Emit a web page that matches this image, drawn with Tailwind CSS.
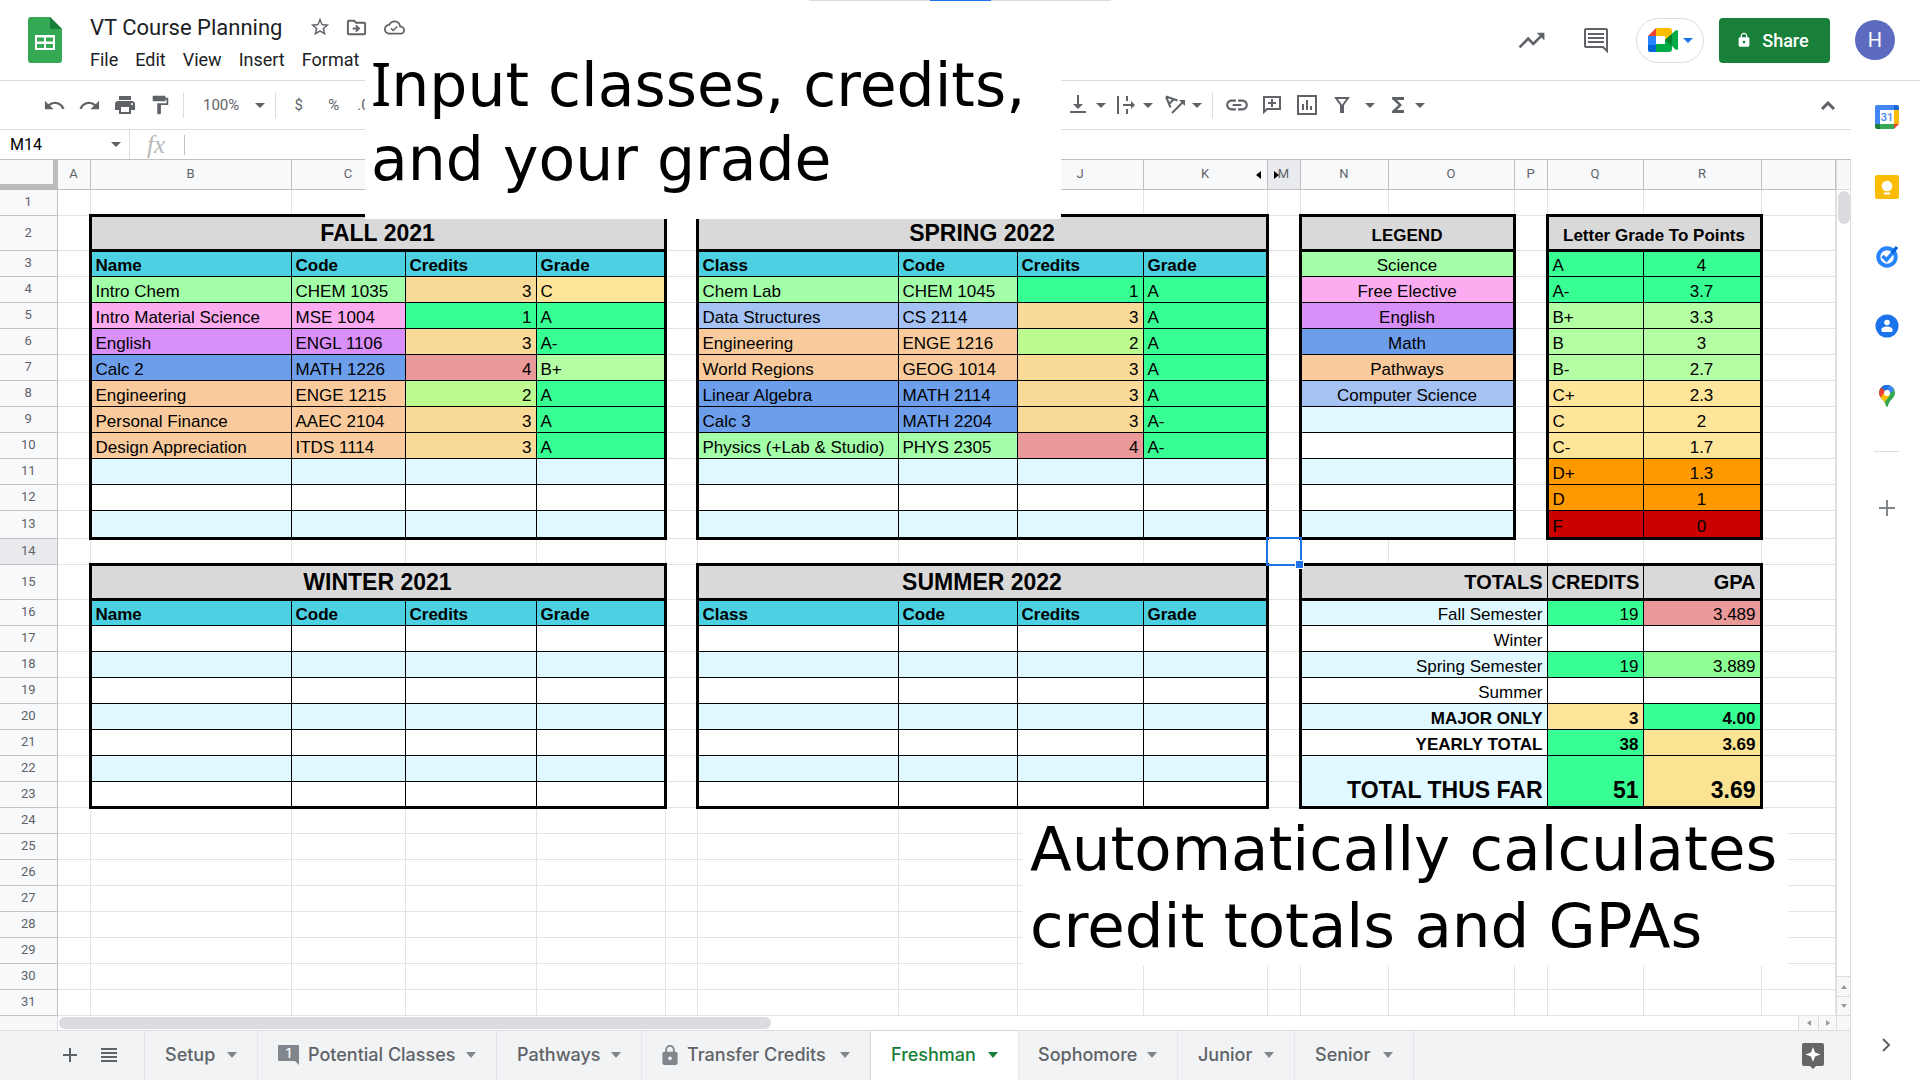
<!DOCTYPE html>
<html lang="en">
<head>
<meta charset="utf-8">
<meta name="viewport" content="width=device-width, initial-scale=1">
<title>VT Course Planning</title>
<script src="https://cdn.jsdelivr.net/npm/@tailwindcss/browser@4"></script>
</head>
<body class="relative flex h-screen flex-col overflow-hidden bg-white font-[Roboto,sans-serif] text-[#5f6368]">

<header class="flex h-[81px] shrink-0 border-b border-[#dadce0]">
  <a href="#" aria-label="Sheets home" class="mt-[17px] ml-7 block h-[46px] w-[34px] shrink-0">
    <svg viewBox="0 0 34 46" class="h-[46px] w-[34px]"><path fill="#34a853" d="M3 0h19l12 12v31a3 3 0 0 1-3 3H3a3 3 0 0 1-3-3V3a3 3 0 0 1 3-3z"/><path fill="#188038" d="M22 0l12 12H22z"/><path fill="#fff" d="M7 18h20v15H7z"/><path fill="#34a853" d="M9 20.500h7v4H9zm9 0h7v4h-7zM9 27h7v4H9zm9 0h7v4h-7z"/></svg>
  </a>
  <div class="ml-[26px] flex-1">
    <div class="mt-2 flex h-[38px] items-center">
      <input aria-label="Document name" value="VT Course Planning" class="w-[213px] bg-transparent pl-[2px] text-[22px] text-[#202124] outline-none">
      <button aria-label="Star" class="ml-2"><svg viewBox="0 0 24 24" class="size-[22px] fill-[#5f6368]"><path d="M22 9.240l-7.190-.620L12 2 9.190 8.630 2 9.240l5.460 4.730L5.820 21 12 17.270 18.180 21l-1.630-7.030L22 9.240zM12 15.400l-3.760 2.270 1-4.280-3.320-2.880 4.380-.380L12 6.100l1.710 4.040 4.380.380-3.320 2.880 1 4.280L12 15.400z"/></svg></button>
      <button aria-label="Move" class="ml-[14px]"><svg viewBox="0 0 24 24" class="size-[23px] fill-[#5f6368]"><path d="M20 6h-8l-2-2H4c-1.100 0-2 .9-2 2v12c0 1.100.9 2 2 2h16c1.100 0 2-.9 2-2V8c0-1.100-.9-2-2-2zm0 12H4V6h5.170l2 2H20v10z"/><path d="M12 17l4-4-4-4-1.400 1.400L12.200 12H8v2h4.200l-1.600 1.600z"/></svg></button>
      <button aria-label="Saved to Drive" class="ml-4"><svg viewBox="0 0 24 24" class="size-[21px] fill-[#5f6368]"><path d="M19.350 10.040C18.670 6.590 15.640 4 12 4 9.110 4 6.600 5.640 5.350 8.040 2.340 8.360 0 10.910 0 14c0 3.310 2.690 6 6 6h13c2.760 0 5-2.240 5-5 0-2.640-2.050-4.780-4.650-4.960zM19 18H6c-2.210 0-4-1.790-4-4 0-2.050 1.530-3.760 3.560-3.970l1.070-.110.500-.950C8.080 7.140 9.940 6 12 6c2.620 0 4.880 1.860 5.390 4.430l.300 1.500 1.530.110c1.560.100 2.780 1.410 2.780 2.960 0 1.650-1.350 3-3 3z"/><path d="M10.500 14.200l-1.800-1.800-1.200 1.200 3 3 5.200-5.200-1.200-1.200z"/></svg></button>
    </div>
    <nav class="flex gap-[17px] text-[18px] leading-[28px] text-[#202124]">
      <button class="ml-[2px]">File</button><button>Edit</button><button>View</button><button>Insert</button><button>Format</button>
    </nav>
  </div>
  <div class="flex items-center pr-[25px]">
    <button aria-label="Activity"><svg viewBox="0 0 24 24" class="size-[31px] fill-[#5f6368]"><path d="M16 6l2.290 2.290-4.880 4.880-4-4L2 16.590 3.410 18l6-6 4 4 6.300-6.290L22 12V6z"/></svg></button>
    <button aria-label="Comments" class="ml-9"><svg viewBox="0 0 26 26" class="size-[26px]"><path fill="none" stroke="#5f6368" stroke-width="2" d="M3 2h20a1 1 0 0 1 1 1v21l-4-4H3a1 1 0 0 1-1-1V3a1 1 0 0 1 1-1z"/><path fill="#5f6368" d="M5 6h16v2H5zm0 4h16v2H5zm0 4h16v2H5z"/></svg></button>
    <button aria-label="Join a call" class="ml-[27px] flex h-[45px] w-[68px] items-center justify-center gap-[5px] rounded-full border border-[#dadce0]">
      <svg viewBox="0 0 30 24" class="h-6 w-[30px]"><path fill="#ea4335" d="M0 8l8-8v8z"/><path fill="#fbbc04" d="M8 0h13a3 3 0 0 1 3 3v5l-7 5V8H8z"/><path fill="#2684fc" d="M0 8h8v9H0z"/><path fill="#0066da" d="M0 17h8v7H2a2 2 0 0 1-2-2z"/><path fill="#00ac47" d="M8 16h9v-4l10-9q3-2 3 0v18q0 2-3 0l-3-3v3a3 3 0 0 1-3 3H8z"/><path fill="#00832d" d="M17 12l7-6v12z"/></svg>
      <svg viewBox="0 0 10 5" class="h-[5px] w-[10px]"><path fill="#1a73e8" d="M0 0h10L5 5z"/></svg>
    </button>
    <button class="ml-[15px] flex h-[45px] w-[111px] items-center justify-center gap-[10px] rounded-[4px] bg-[#188038] pr-1 text-[18px] font-medium text-white"><svg viewBox="0 0 24 24" class="size-4 fill-white"><path d="M18 8h-1V6c0-2.760-2.240-5-5-5S7 3.240 7 6v2H6c-1.100 0-2 .9-2 2v10c0 1.100.9 2 2 2h12c1.100 0 2-.9 2-2V10c0-1.100-.9-2-2-2zm-6 9c-1.100 0-2-.9-2-2s.9-2 2-2 2 .9 2 2-.9 2-2 2zm3.100-9H8.900V6c0-1.710 1.390-3.100 3.100-3.100 1.710 0 3.100 1.390 3.100 3.100v2z"/></svg>Share</button>
    <button aria-label="Account" class="ml-[25px] size-10 rounded-full bg-[#5c6bc0] text-[20px] text-white">H</button>
  </div>
</header>

<div class="flex min-h-0 flex-1">
  <main class="flex min-w-0 flex-1 flex-col">
    <div class="flex h-[49px] shrink-0 items-center border-b border-[#dadce0] text-[15px]">
      <div class="flex w-[1061px] shrink-0 items-center pl-[37px]">
        <button aria-label="Undo" class="flex w-[35px] justify-center"><svg viewBox="0 0 24 24" class="size-[23px] fill-[#5f6368]"><path d="M12.500 8c-2.650 0-5.050.990-6.900 2.600L2 7v9h9l-3.620-3.620c1.390-1.160 3.160-1.880 5.120-1.880 3.540 0 6.550 2.310 7.600 5.500l2.370-.780C21.080 11.030 17.150 8 12.500 8z"/></svg></button>
        <button aria-label="Redo" class="flex w-[35px] justify-center"><svg viewBox="0 0 24 24" class="size-[23px] fill-[#5f6368]"><path d="M18.400 10.600C16.550 8.990 14.150 8 11.500 8c-4.650 0-8.580 3.030-9.960 7.220L3.900 16c1.050-3.190 4.050-5.500 7.600-5.500 1.950 0 3.730.720 5.120 1.880L13 16h9V7l-3.600 3.600z"/></svg></button>
        <button aria-label="Print" class="flex w-[35px] justify-center"><svg viewBox="0 0 24 24" class="size-[24px] fill-[#5f6368]"><path d="M19 8H5c-1.660 0-3 1.340-3 3v6h4v4h12v-4h4v-6c0-1.660-1.340-3-3-3zm-3 11H8v-5h8v5zm3-7c-.550 0-1-.450-1-1s.450-1 1-1 1 .450 1 1-.450 1-1 1zm-1-9H6v4h12V3z"/></svg></button>
        <button aria-label="Paint format" class="flex w-[35px] justify-center"><svg viewBox="0 0 24 24" class="size-[22px] fill-[#5f6368]"><path d="M18 4V3c0-.550-.450-1-1-1H5c-.550 0-1 .450-1 1v4c0 .550.450 1 1 1h12c.550 0 1-.450 1-1V6h1v4H9v11c0 .550.450 1 1 1h2c.550 0 1-.450 1-1v-9h8V4h-3z"/></svg></button>
        <span class="ml-[6px] h-[25px] w-px bg-[#dadce0]"></span>
        <button class="ml-[19px] flex items-center gap-[16px]">100%<svg viewBox="0 0 10 5" class="h-[5px] w-[10px]"><path fill="#5f6368" d="M0 0h10L5 5z"/></svg></button>
        <span class="ml-[10px] h-[25px] w-px bg-[#dadce0]"></span>
        <button class="ml-[5px] w-[35px] text-center">$</button>
        <button class="w-[35px] text-center">%</button>
        <button class="ml-[6px]">.0</button>
      </div>
      <div class="flex flex-1 items-center">
        <button aria-label="Vertical align" class="flex w-[50px] items-center gap-[10px] pl-[9px]"><svg viewBox="0 0 16 20" class="h-5 w-4 shrink-0"><path fill="#5f6368" d="M0 16h16v2H0zM7 0h2v9h4l-5 5-5-5h4z"/></svg><svg viewBox="0 0 10 5" class="h-[5px] w-[10px]"><path fill="#5f6368" d="M0 0h10L5 5z"/></svg></button>
        <button aria-label="Text wrapping" class="flex w-[49px] items-center gap-[8px] pl-[6px]"><svg viewBox="0 0 18 20" class="h-5 w-[18px] shrink-0"><path fill="#5f6368" d="M0 1h2v18H0zM9 1h2v5H9zM9 14h2v5H9zM6 9h8V6l4 4-4 4v-3H6z"/></svg><svg viewBox="0 0 10 5" class="h-[5px] w-[10px]"><path fill="#5f6368" d="M0 0h10L5 5z"/></svg></button>
        <button aria-label="Text rotation" class="flex w-[44px] items-center gap-[6px] pl-[5px]"><svg viewBox="0 0 21 20" class="h-5 w-[21px] shrink-0"><path fill="none" stroke="#5f6368" stroke-width="2" d="M1 1.500l11.500 4M1 1.500l4.500 11M4 9l5-5M7 18l11-11"/><path fill="#5f6368" d="M14 5h6v6z"/></svg><svg viewBox="0 0 10 5" class="h-[5px] w-[10px] shrink-0"><path fill="#5f6368" d="M0 0h10L5 5z"/></svg></button>
        <span class="ml-2 h-[25px] w-px bg-[#dadce0]"></span>
        <button aria-label="Insert link" class="ml-[6px] flex w-[35px] justify-center"><svg viewBox="0 0 24 24" class="size-[26px] fill-[#5f6368]"><path d="M3.900 12c0-1.710 1.390-3.100 3.100-3.100h4V7H7c-2.760 0-5 2.240-5 5s2.240 5 5 5h4v-1.900H7c-1.710 0-3.100-1.390-3.100-3.100zM8 13h8v-2H8v2zm9-6h-4v1.900h4c1.710 0 3.100 1.390 3.100 3.100s-1.390 3.100-3.100 3.100h-4V17h4c2.760 0 5-2.240 5-5s-2.240-5-5-5z"/></svg></button>
        <button aria-label="Insert comment" class="flex w-[35px] justify-center"><svg viewBox="0 0 18 18" class="size-[18px]"><path fill="none" stroke="#5f6368" stroke-width="2" d="M1 1h16v12H4l-3 3z"/><path fill="#5f6368" d="M8 3h2v3h3v2h-3v3H8V8H5V6h3z"/></svg></button>
        <button aria-label="Insert chart" class="flex w-[35px] justify-center"><svg viewBox="0 0 20 20" class="size-5"><path fill="none" stroke="#5f6368" stroke-width="2" d="M1 1h18v18H1z"/><path fill="#5f6368" d="M5 9h2v6H5zm4-4h2v10H9zm4 6h2v4h-2z"/></svg></button>
        <button aria-label="Create a filter" class="flex w-[36px] justify-center"><svg viewBox="0 0 16 16" class="size-4"><path fill="none" stroke="#5f6368" stroke-width="2" d="M2 1h12L9 8v7H7V8z"/></svg></button>
        <button aria-label="Filter views" class="flex w-5 justify-center"><svg viewBox="0 0 10 5" class="h-[5px] w-[10px]"><path fill="#5f6368" d="M0 0h10L5 5z"/></svg></button>
        <button aria-label="Functions" class="ml-[6px] flex items-center gap-[5px]"><svg viewBox="0 0 24 24" class="size-6 fill-[#5f6368]"><path d="M18 4H6v2l6.500 6L6 18v2h12v-3h-7l5-5-5-5h7z"/></svg><svg viewBox="0 0 10 5" class="h-[5px] w-[10px]"><path fill="#5f6368" d="M0 0h10L5 5z"/></svg></button>
      </div>
      <button aria-label="Hide the menus" class="mr-4"><svg viewBox="0 0 14 9" class="h-[9px] w-[14px]"><path fill="none" stroke="#5f6368" stroke-width="3" d="M1 8l6-6 6 6"/></svg></button>
    </div>

    <div class="flex h-[30px] shrink-0 items-center border-b border-[#c0c0c0]">
      <input aria-label="Name box" value="M14" class="w-[111px] bg-transparent pl-[10px] text-[16px] text-black outline-none">
      <button aria-label="Name box menu"><svg viewBox="0 0 10 5" class="h-[5px] w-[10px]"><path fill="#5f6368" d="M0 0h10L5 5z"/></svg></button>
      <span class="ml-2 h-full w-px bg-[#dadce0]"></span>
      <label for="formula" class="w-[54px] pl-[17px] font-['Liberation_Serif',serif] text-[25px] leading-[26px] text-[#b8b8b8] italic">fx</label>
      <input id="formula" class="h-5 flex-1 border-l border-[#c0c0c0] bg-transparent pl-2 outline-none">
    </div>

    <div class="flex min-h-0 flex-1">
      <div class="min-w-0 flex-1 overflow-hidden">
        <table id="sheet" class="w-full table-fixed border-collapse font-['Liberation_Sans',Arial,sans-serif] text-[17px] leading-[20px] text-black"></table>
      </div>
      <div class="flex w-[15px] shrink-0 flex-col items-center border-x border-[#dadce0]">
        <div class="h-[30px] w-full border-b border-[#dadce0] bg-[#f8f8f8]"></div>
        <div class="mt-px h-[33px] w-3 rounded-full bg-[#dadce0]"></div>
        <div class="flex-1"></div>
        <button aria-label="Scroll up" class="flex h-5 w-full items-center justify-center border-t border-[#dadce0] bg-[#f8f8f8]"><svg viewBox="0 0 6 4" class="h-1 w-[6px]"><path fill="#999" d="M0 4h6L3 0z"/></svg></button>
        <button aria-label="Scroll down" class="flex h-5 w-full items-center justify-center border-y border-[#dadce0] bg-[#f8f8f8]"><svg viewBox="0 0 6 4" class="h-1 w-[6px]"><path fill="#999" d="M0 0h6L3 4z"/></svg></button>
      </div>
    </div>

    <div class="flex h-[15px] shrink-0 items-center border-r border-b border-[#dadce0]">
      <div class="h-full w-[58px] border-r border-[#dadce0] bg-[#f8f8f8]"></div>
      <div class="ml-px h-3 w-[712px] rounded-full bg-[#dadce0]"></div>
      <div class="flex-1"></div>
      <button aria-label="Scroll left" class="flex h-full w-5 items-center justify-center border-l border-[#dadce0] bg-[#f8f8f8]"><svg viewBox="0 0 4 6" class="h-[6px] w-1"><path fill="#999" d="M4 0v6L0 3z"/></svg></button>
      <button aria-label="Scroll right" class="flex h-full w-[18px] items-center justify-center border-l border-[#dadce0] bg-[#f8f8f8]"><svg viewBox="0 0 4 6" class="h-[6px] w-1"><path fill="#999" d="M0 0v6l4-3z"/></svg></button>
      <div class="h-full w-[14px] border-l border-[#dadce0] bg-[#f8f8f8]"></div>
    </div>

    <footer class="flex h-[49px] shrink-0 items-center border-r border-[#dadce0] bg-[#f1f3f4] font-[Inter,sans-serif] text-[18px] font-medium">
      <div class="flex h-full w-[145px] shrink-0 items-center border-r border-[#e3e5e8] pl-[63px] pb-px">
        <button aria-label="Add sheet"><svg viewBox="0 0 14 14" class="size-[14px]"><path fill="#5f6368" d="M6 0h2v6h6v2H8v6H6V8H0V6h6z"/></svg></button>
        <button aria-label="All sheets" class="ml-6"><svg viewBox="0 0 16 15" class="h-[15px] w-4"><path fill="#5f6368" d="M0 0h16v2H0zm0 4h16v2H0zm0 4h16v2H0zm0 4h16v2H0z"/></svg></button>
      </div>
      <div id="tabs" class="flex h-full flex-1"></div>
      <button aria-label="Explore" class="mr-[25px]"><svg viewBox="0 0 24 26" class="h-[26px] w-6"><path fill="#666" d="M3 0h18a2 2 0 0 1 2 2v19a2 2 0 0 1-2 2h-6l-3 3-3-3H3a2 2 0 0 1-2-2V2a2 2 0 0 1 2-2z"/><path fill="#fff" d="M12 4l2 5.500 5.500 2-5.500 2L12 19l-2-5.500-5.500-2L10 9.500z"/></svg></button>
    </footer>
  </main>

  <aside class="flex w-[69px] shrink-0 flex-col items-center pl-[2px]">
    <button aria-label="Calendar" class="mt-6"><svg viewBox="0 0 24 24" class="size-6"><path fill="#4285f4" d="M2 0h17v5H5v14H0V2a2 2 0 0 1 2-2z"/><path fill="#1967d2" d="M19 0h3a2 2 0 0 1 2 2v3h-5z"/><path fill="#fbbc04" d="M19 5h5v14h-5z"/><path fill="#34a853" d="M5 19h14v5H5z"/><path fill="#188038" d="M0 19h5v5H2a2 2 0 0 1-2-2z"/><path fill="#ea4335" d="M19 19h5l-5 5z"/><path fill="#fff" d="M5 5h14v14H5z"/><text x="12" y="16" text-anchor="middle" font-size="11" font-weight="500" fill="#4285f4">31</text></svg></button>
    <button aria-label="Keep" class="mt-[46px]"><svg viewBox="0 0 24 24" class="size-6"><rect width="24" height="24" rx="2" fill="#fbbc04"/><circle cx="12" cy="11" r="5.300" fill="#fff"/><path fill="#fff" d="M9 14h6v2H9zm0 3.500h6v2H9z"/></svg></button>
    <button aria-label="Tasks" class="mt-[45px]"><svg viewBox="0 0 24 24" class="size-6"><circle cx="12" cy="13" r="8.700" fill="none" stroke="#2684fc" stroke-width="4"/><path fill="none" stroke="#2684fc" stroke-width="3.500" d="M7.500 12l4 4L20 6"/><path fill="none" stroke="#0066da" stroke-width="3.500" d="M17 9l5-6"/></svg></button>
    <button aria-label="Contacts" class="mt-[46px]"><svg viewBox="0 0 24 24" class="size-6"><circle cx="12" cy="12" r="11.500" fill="#1a73e8"/><circle cx="12" cy="8.500" r="2.800" fill="#fff"/><path fill="#fff" d="M6.500 17v-1.500c0-2 3-3 5.500-3s5.500 1 5.500 3V17a1 1 0 0 1-1 1h-9a1 1 0 0 1-1-1z"/></svg></button>
    <button aria-label="Maps" class="mt-[47px]"><svg viewBox="0 0 16 22" class="h-[22px] w-4"><clipPath id="pin"><path d="M8 0a8 8 0 0 1 8 8c0 5-6 7-7 13q-1 2-2 0C6 15 0 13 0 8a8 8 0 0 1 8-8z"/></clipPath><g clip-path="url(#pin)"><path fill="#34a853" d="M0 0h16v22H0z"/><path fill="#4285f4" d="M4 0h12v4L9 10z"/><path fill="#1a73e8" d="M2 0h9L6 7 1 4z"/><path fill="#ea4335" d="M0 2l2 0 5 5-5 6-2-2z"/><path fill="#fbbc04" d="M6 7l5 3-6 8-4-5z"/></g><circle cx="8" cy="8" r="3" fill="#fff"/></svg></button>
    <span class="mt-11 h-px w-[25px] shrink-0 bg-[#dadce0]"></span>
    <button aria-label="Get add-ons" class="mt-12"><svg viewBox="0 0 16 16" class="size-4"><path fill="#80868b" d="M7 0h2v7h7v2H9v7H7V9H0V7h7z"/></svg></button>
    <div class="flex-1"></div>
    <button aria-label="Hide side panel" class="mb-7"><svg viewBox="0 0 9 14" class="h-[14px] w-[9px]"><path fill="none" stroke="#5f6368" stroke-width="2" d="M1 1l6 6-6 6"/></svg></button>
  </aside>
</div>

<!-- loading strip at the top edge -->
<div class="absolute top-0 left-[809px] flex h-px w-[302px] justify-center bg-[#dadce0]"><span class="h-px w-[61px] bg-[#1a73e8]"></span></div>

<!-- captions laid over the sheet -->
<p class="absolute top-[46px] left-[365px] h-[173px] w-[696px] bg-white pl-[6px] font-['DejaVu_Sans',Verdana,sans-serif] text-[60px] leading-[74px] whitespace-nowrap text-black"><span class="font-['Noto_Sans',sans-serif]">I</span>nput classes, credits,<br>and your grade</p>
<p class="absolute top-[810px] left-[1022px] h-[156px] w-[766px] bg-white pl-[8px] font-['DejaVu_Sans',Verdana,sans-serif] text-[61px] leading-[77px] whitespace-nowrap text-black">Automatically calculates<br>credit totals and GPAs</p>

<script>
const GRID = '#e2e3e3', BLACK = '#000000';
const LETTERS = ['A','B','C','','','','','','J','K','M','N','O','P','Q','R',''];
const WIDTHS = [33,201,114,131,129,32,201,119,126,124,33,88,126,33,96,118];
const HEIGHTS = {2:35, 13:28, 15:35};
const C = {
  title:'#d9d9d9', head:'#4dd0e1', band:'#e0f8ff', white:'#ffffff',
  sci:'#a4ffa9', free:'#fbacf0', eng:'#d88ff8', math:'#6d9eeb', path:'#f9cb9c', cs:'#a4c2f4',
  A:'#38ff94', B:'#b4ffa3', C:'#ffe599', D:'#ff9900', F:'#cc0000',
  c1:'#38ff94', c2:'#bdfb90', c3:'#f9da97', c4:'#ea9999', ok:'#8dff94', fair:'#fbe394'
};
const cells = {};
const key = (r, c) => r + '_' + c;
const put = (r, c, text, bg, cls = '', span = 1, rows = 1) => {
  cells[key(r, c)] = {text, bg: C[bg] || '', cls, span, rows};
  for (let i = 0; i < rows; i++) for (let j = 0; j < span; j++) if (i || j) cells[key(r + i, c + j)] = 'covered';
};
const BIG = 'pb-[6px] text-[23px] font-bold', MID = 'pb-[6px] text-[20px] font-bold';

/* outer boxes: first column, last column, first row, last row (column 1 is B) */
const boxes = [[1,4,2,13],[6,9,2,13],[11,12,2,13],[14,15,2,13],[1,4,15,23],[6,9,15,23],[11,15,15,23]];

function semester(c, r, title, first, rows, last, evenBand) {
  put(r, c, title, 'title', 'text-center ' + BIG, 4);
  [first, 'Code', 'Credits', 'Grade'].forEach((t, i) => put(r + 1, c + i, t, 'head', 'font-bold'));
  for (let y = r + 2, i = 0; y <= last; y++, i++) {
    const row = rows[i];
    if (row) {
      put(y, c, row[0], row[4]); put(y, c + 1, row[1], row[4]);
      put(y, c + 2, row[2], 'c' + row[2], 'text-right'); put(y, c + 3, row[3], row[3][0]);
    } else for (let j = 0; j < 4; j++) put(y, c + j, '', (y % 2 === 0) === evenBand ? 'band' : 'white');
  }
}
semester(1, 2, 'FALL 2021', 'Name', [
  ['Intro Chem','CHEM 1035',3,'C','sci'], ['Intro Material Science','MSE 1004',1,'A','free'],
  ['English','ENGL 1106',3,'A-','eng'], ['Calc 2','MATH 1226',4,'B+','math'],
  ['Engineering','ENGE 1215',2,'A','path'], ['Personal Finance','AAEC 2104',3,'A','path'],
  ['Design Appreciation','ITDS 1114',3,'A','path']], 13, false);
semester(6, 2, 'SPRING 2022', 'Class', [
  ['Chem Lab','CHEM 1045',1,'A','sci'], ['Data Structures','CS 2114',3,'A','cs'],
  ['Engineering','ENGE 1216',2,'A','path'], ['World Regions','GEOG 1014',3,'A','path'],
  ['Linear Algebra','MATH 2114',3,'A','math'], ['Calc 3','MATH 2204',3,'A-','math'],
  ['Physics (+Lab & Studio)','PHYS 2305',4,'A-','sci']], 13, false);
semester(1, 15, 'WINTER 2021', 'Name', [], 23, true);
semester(6, 15, 'SUMMER 2022', 'Class', [], 23, true);

put(2, 11, 'LEGEND', 'title', 'pb-[3px] text-center font-bold', 2);
[['Science','sci'],['Free Elective','free'],['English','eng'],['Math','math'],['Pathways','path'],['Computer Science','cs'],
 ['','band'],['','white'],['','band'],['','white'],['','band']].forEach((x, i) => put(3 + i, 11, x[0], x[1], 'text-center', 2));

put(2, 14, 'Letter Grade To Points', 'title', 'pb-[3px] text-center font-bold', 2);
[['A','4'],['A-','3.7'],['B+','3.3'],['B','3'],['B-','2.7'],['C+','2.3'],['C','2'],['C-','1.7'],['D+','1.3'],['D','1'],['F','0']]
  .forEach((x, i) => { put(3 + i, 14, x[0], x[0][0]); put(3 + i, 15, x[1], x[0][0], 'text-center'); });

put(15, 11, 'TOTALS', 'title', 'text-right ' + MID, 3);
put(15, 14, 'CREDITS', 'title', 'text-right ' + MID);
put(15, 15, 'GPA', 'title', 'text-right ' + MID);
[['Fall Semester','19','3.489','band','A','c4'],['Winter','','','white','white','white'],['Spring Semester','19','3.889','band','A','ok'],
 ['Summer','','','white','white','white'],['MAJOR ONLY','3','4.00','band','C','A','font-bold'],['YEARLY TOTAL','38','3.69','white','A','fair','font-bold']]
  .forEach((x, i) => {
    const cls = 'text-right ' + (x[6] || '');
    put(16 + i, 11, x[0], x[3], cls, 3); put(16 + i, 14, x[1], x[4], cls); put(16 + i, 15, x[2], x[5], cls);
  });
put(22, 11, 'TOTAL THUS FAR', 'band', 'text-right ' + BIG, 3, 2);
put(22, 14, '51', 'A', 'text-right ' + BIG, 1, 2);
put(22, 15, '3.69', 'fair', 'text-right ' + BIG, 1, 2);

const edge = (w, color) => w + 'px solid ' + color;
function right(r, c) {
  for (const [a, b, t, e] of boxes) if (r >= t && r <= e) {
    if (c === a - 1 || c === b) return edge(3, BLACK);
    if (c >= a && c < b) return edge(1, BLACK);
  }
  return edge(1, GRID);
}
function bottom(r, c) {
  for (const [a, b, t, e] of boxes) if (c >= a && c <= b) {
    if (r === t - 1 || r === e || r === t) return edge(3, BLACK);
    if (r > t && r < e) return edge(1, BLACK);
  }
  return edge(1, GRID);
}
const esc = s => String(s).replace(/&/g, '&amp;');
let html = '<colgroup><col style="width:57px">' + WIDTHS.map(w => `<col style="width:${w}px">`).join('') + '<col></colgroup><thead><tr class="h-[29px] font-[Roboto,sans-serif] text-[13px] text-[#5f6368]">';
html += '<th class="border-r border-b border-[#bcbcbc] bg-[#f8f9fa] p-0 shadow-[inset_-4px_-5px_0_#bcbcbc]"></th>';
LETTERS.forEach((l, c) => {
  let mark = '';
  if (l === 'K') mark = '<svg viewBox="0 0 5 8" class="absolute top-[11px] right-[6px] h-2 w-[5px]"><path d="M5 0v8L0 4z"/></svg>';
  if (l === 'M') mark = '<svg viewBox="0 0 5 8" class="absolute top-[11px] left-[6px] h-2 w-[5px]"><path d="M0 0v8l5-4z"/></svg>';
  html += `<th class="relative border-r border-b border-[#c0c0c0] p-0 font-normal ${l === 'M' ? 'bg-[#e8eaed]' : 'bg-[#f8f9fa]'}">${l}${mark}</th>`;
});
html += '</tr></thead><tbody>';
for (let r = 1; r <= 31; r++) {
  html += `<tr style="height:${HEIGHTS[r] || 26}px"><th class="border-r border-b border-[#c0c0c0] p-0 font-[Roboto,sans-serif] text-[13px] leading-[20px] font-normal text-[#5f6368] ${r === 14 ? 'bg-[#e8eaed]' : 'bg-[#f8f9fa]'}">${r}</th>`;
  for (let c = 0; c < 17; c++) {
    const d = cells[key(r, c)];
    if (d === 'covered') continue;
    const s = d || {text:'', bg:'', cls:'', span:1, rows:1};
    let style = `border-right:${right(r, c + s.span - 1)};border-bottom:${bottom(r + s.rows - 1, c)}`;
    if (s.bg) style += `;background:${s.bg}`;
    const sel = r === 14 && c === 10 ? '<span class="absolute -top-[2px] -left-[2px] -right-[2px] -bottom-[2px] z-10 border-2 border-[#1a73e8]"><span class="absolute -right-[4px] -bottom-[5px] size-[9px] border border-white bg-[#1a73e8]"></span></span>' : '';
    html += `<td${s.span > 1 ? ` colspan="${s.span}"` : ''}${s.rows > 1 ? ` rowspan="${s.rows}"` : ''} class="${sel ? 'relative ' : ''}overflow-visible p-0 px-1 align-bottom whitespace-nowrap ${s.cls}" style="${style}">${esc(s.text)}${sel}</td>`;
  }
  html += '</tr>';
}
document.getElementById('sheet').innerHTML = html + '</tbody>';

const badge = '<svg viewBox="0 0 21 20" class="h-5 w-[21px] shrink-0"><path fill="#80868b" d="M1 0h19a1 1 0 0 1 1 1v19l-4-4H1a1 1 0 0 1-1-1V1a1 1 0 0 1 1-1z"/><text x="10.500" y="12.500" text-anchor="middle" font-size="13" fill="#fff">1</text></svg>';
const lock = '<svg viewBox="4 1 16 21" class="h-5 w-[16px] shrink-0 fill-[#80868b]"><path d="M18 8h-1V6c0-2.760-2.240-5-5-5S7 3.240 7 6v2H6c-1.100 0-2 .9-2 2v10c0 1.100.9 2 2 2h12c1.100 0 2-.9 2-2V10c0-1.100-.9-2-2-2zm-6 9c-1.100 0-2-.9-2-2s.9-2 2-2 2 .9 2 2-.9 2-2 2zm3.100-9H8.900V6c0-1.710 1.390-3.100 3.100-3.100 1.710 0 3.100 1.390 3.100 3.100v2z"/></svg>';
document.getElementById('tabs').innerHTML = [['Setup',113],['Potential Classes',239,badge],['Pathways',145],['Transfer Credits',229,lock],['Freshman',147],['Sophomore',160],['Junior',117],['Senior',119]]
  .map(([name, w, icon]) => {
    const on = name === 'Freshman';
    return `<button style="width:${w}px" class="flex h-full items-center gap-[9px] px-5 pb-[2px] ${on ? 'bg-white text-[#188038] shadow' : 'border-r border-[#e3e5e8]'}">${icon || ''}<span class="flex-1 text-left whitespace-nowrap">${name}</span><svg viewBox="0 0 10 6" class="h-[6px] w-[10px] shrink-0"><path fill="${on ? '#188038' : '#80868b'}" d="M0 0h10L5 6z"/></svg></button>`;
  }).join('');
</script>
</body>
</html>
